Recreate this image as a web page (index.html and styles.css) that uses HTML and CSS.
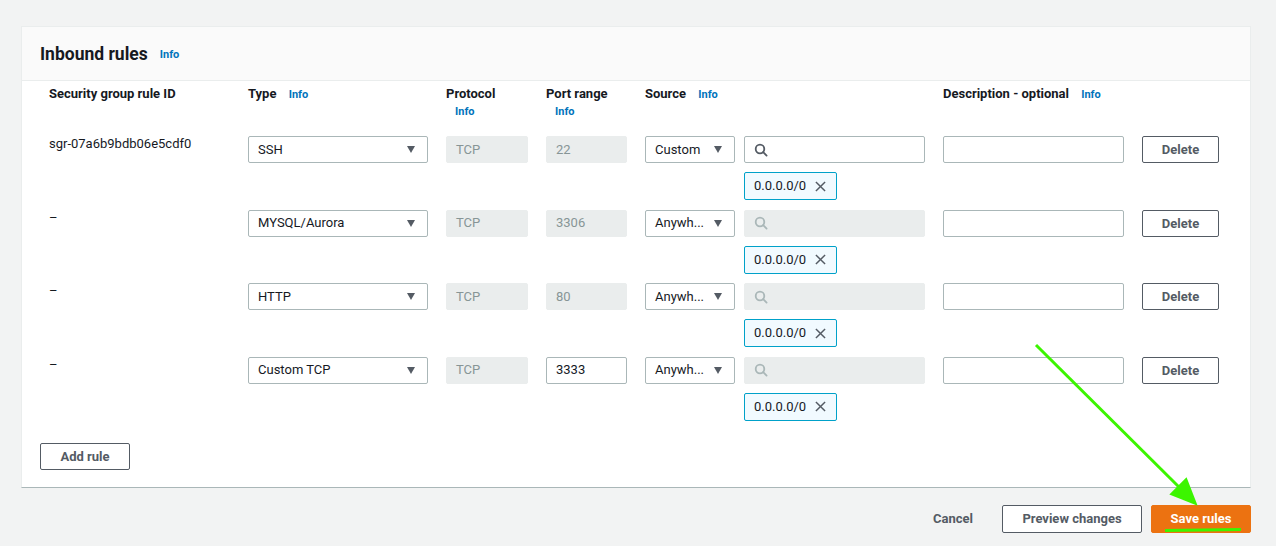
FILE: index.html
```html
<!DOCTYPE html>
<html lang="en">
<head>
<meta charset="utf-8">
<title>Inbound rules</title>
<link rel="stylesheet" href="styles.css">
</head>
<body>
<div class="page">
  <section class="card">
    <header class="card-header">
      <h2 class="title">Inbound rules</h2>
      <a class="info">Info</a>
    </header>
    <div class="card-body">
      <div class="table">
        <div class="grid head">
          <div class="th">Security group rule ID</div>
          <div class="th">Type <a class="info">Info</a></div>
          <div class="th">Protocol <a class="info block">Info</a></div>
          <div class="th">Port range <a class="info block">Info</a></div>
          <div class="th">Source <a class="info">Info</a></div>
          <div class="th">Description - optional <a class="info">Info</a></div>
          <div class="th"></div>
        </div>

        <div class="grid row">
          <div class="cell-text">sgr-07a6b9bdb06e5cdf0</div>
          <div class="field select">SSH<span class="caret"></span></div>
          <div class="field disabled">TCP</div>
          <div class="field disabled">22</div>
          <div class="source">
            <div class="field select">Custom<span class="caret"></span></div>
            <div class="field search"><svg class="mag" viewBox="0 0 14 14"><circle cx="6" cy="6" r="4.3"/><line x1="9.2" y1="9.2" x2="12.6" y2="12.6"/></svg></div>
            <div class="chip">0.0.0.0/0<svg class="x" viewBox="0 0 12 12"><line x1="1" y1="1" x2="11" y2="11"/><line x1="11" y1="1" x2="1" y2="11"/></svg></div>
          </div>
          <div class="field"></div>
          <div class="btn">Delete</div>
        </div>

        <div class="grid row">
          <div class="cell-text">–</div>
          <div class="field select">MYSQL/Aurora<span class="caret"></span></div>
          <div class="field disabled">TCP</div>
          <div class="field disabled">3306</div>
          <div class="source">
            <div class="field select">Anywh...<span class="caret"></span></div>
            <div class="field search disabled"><svg class="mag" viewBox="0 0 14 14"><circle cx="6" cy="6" r="4.3"/><line x1="9.2" y1="9.2" x2="12.6" y2="12.6"/></svg></div>
            <div class="chip">0.0.0.0/0<svg class="x" viewBox="0 0 12 12"><line x1="1" y1="1" x2="11" y2="11"/><line x1="11" y1="1" x2="1" y2="11"/></svg></div>
          </div>
          <div class="field"></div>
          <div class="btn">Delete</div>
        </div>

        <div class="grid row">
          <div class="cell-text">–</div>
          <div class="field select">HTTP<span class="caret"></span></div>
          <div class="field disabled">TCP</div>
          <div class="field disabled">80</div>
          <div class="source">
            <div class="field select">Anywh...<span class="caret"></span></div>
            <div class="field search disabled"><svg class="mag" viewBox="0 0 14 14"><circle cx="6" cy="6" r="4.3"/><line x1="9.2" y1="9.2" x2="12.6" y2="12.6"/></svg></div>
            <div class="chip">0.0.0.0/0<svg class="x" viewBox="0 0 12 12"><line x1="1" y1="1" x2="11" y2="11"/><line x1="11" y1="1" x2="1" y2="11"/></svg></div>
          </div>
          <div class="field"></div>
          <div class="btn">Delete</div>
        </div>

        <div class="grid row">
          <div class="cell-text">–</div>
          <div class="field select">Custom TCP<span class="caret"></span></div>
          <div class="field disabled">TCP</div>
          <div class="field">3333</div>
          <div class="source">
            <div class="field select">Anywh...<span class="caret"></span></div>
            <div class="field search disabled"><svg class="mag" viewBox="0 0 14 14"><circle cx="6" cy="6" r="4.3"/><line x1="9.2" y1="9.2" x2="12.6" y2="12.6"/></svg></div>
            <div class="chip">0.0.0.0/0<svg class="x" viewBox="0 0 12 12"><line x1="1" y1="1" x2="11" y2="11"/><line x1="11" y1="1" x2="1" y2="11"/></svg></div>
          </div>
          <div class="field"></div>
          <div class="btn">Delete</div>
        </div>
      </div>
      <div class="btn add">Add rule</div>
    </div>
  </section>

  <footer class="actions">
    <div class="btn link">Cancel</div>
    <div class="btn normal">Preview changes</div>
    <div class="btn primary">Save rules</div>
  </footer>
</div>

<svg class="annotation" width="1276" height="546" viewBox="0 0 1276 546">
  <line x1="1036" y1="345" x2="1183" y2="491" />
  <polygon points="1195,503 1172,494 1186,480" />
  <line x1="1165" y1="530.5" x2="1241" y2="529.5" />
</svg>
</body>
</html>
```

FILE: styles.css
```css
* { box-sizing: border-box; }

html, body {
  margin: 0;
  padding: 0;
  background: #f2f3f3;
}

body {
  font-family: Roboto, "Open Sans", Arial, sans-serif;
  font-size: 13px;
  color: #16191f;
  width: 1276px;
  height: 546px;
  overflow: hidden;
  position: relative;
}

.page {
  padding: 26px 25px 0 21px;
}

.card {
  background: #fff;
  border: 1px solid #eaeded;
  border-bottom-color: #aab7b8;
}

.card-header {
  height: 54px;
  background: #fafafa;
  border-bottom: 1px solid #eaeded;
  display: flex;
  align-items: center;
  padding: 0 18px;
}

.title {
  margin: 0;
  font-size: 17.5px;
  font-weight: 700;
  line-height: 22px;
}

.info {
  color: #0073bb;
  font-size: 11px;
  font-weight: 700;
  margin-left: 9px;
}

.info.block {
  display: block;
  margin-left: 9px;
}

.card-header .info { margin-left: 12px; margin-top: 2px; }

.card-body {
  padding: 4px 18px 17px 18px;
}

.table {
  padding-left: 9px;
}

.grid {
  display: grid;
  grid-template-columns: 181px 180px 82px 81px 280px 181px 77px;
  column-gap: 18px;
}

.head {
  height: 36px;
  margin-bottom: 15px;
}

.th {
  font-weight: 700;
  line-height: 18px;
}

.row {
  margin-bottom: 9.5px;
  align-items: start;
}

.cell-text {
  line-height: 16px;
}

.field {
  height: 27px;
  border: 1px solid #aab7b8;
  border-radius: 2px;
  background: #fff;
  padding: 0 9px;
  display: flex;
  align-items: center;
  line-height: 16px;
  white-space: nowrap;
}

.field.disabled {
  background: #eaeded;
  border-color: #eaeded;
  color: #879596;
}

.select {
  justify-content: space-between;
  padding-right: 12px;
}

.caret {
  width: 0;
  height: 0;
  border-left: 4.5px solid transparent;
  border-right: 4.5px solid transparent;
  border-top: 7px solid #545b64;
}

.source {
  display: grid;
  grid-template-columns: 90px 181px;
  column-gap: 9px;
  row-gap: 9px;
}

.source .chip {
  grid-column: 2;
}

.mag {
  width: 14px;
  height: 14px;
  fill: none;
  stroke: #545b64;
  stroke-width: 1.8;
  stroke-linecap: round;
}

.search.disabled .mag { stroke: #aab7b8; }

.chip {
  justify-self: start;
  height: 28px;
  width: 93px;
  border: 1px solid #00a1c9;
  border-radius: 2px;
  background: #f1faff;
  display: flex;
  align-items: center;
  padding: 0 8px 0 9px;
  gap: 9px;
  line-height: 16px;
}

.x {
  width: 11px;
  height: 11px;
  stroke: #545b64;
  stroke-width: 1.6;
}

.btn {
  height: 27px;
  border: 1px solid #545b64;
  border-radius: 2px;
  background: #fff;
  color: #545b64;
  font-weight: 700;
  display: flex;
  align-items: center;
  justify-content: center;
  white-space: nowrap;
}

.add {
  width: 90px;
  margin-top: 22px;
}

.actions {
  display: flex;
  justify-content: flex-end;
  gap: 9px;
  margin-top: 17px;
}

.actions .btn { height: 28px; }

.btn.link {
  border-color: transparent;
  background: transparent;
  padding: 0 19px;
}

.btn.normal {
  width: 140px;
}

.btn.primary {
  width: 100px;
  background: #ec7211;
  border-color: #ec7211;
  color: #fff;
}

.annotation {
  position: absolute;
  left: 0;
  top: 0;
  pointer-events: none;
  stroke: #3cf500;
  fill: #3cf500;
  stroke-width: 3;
}
```
